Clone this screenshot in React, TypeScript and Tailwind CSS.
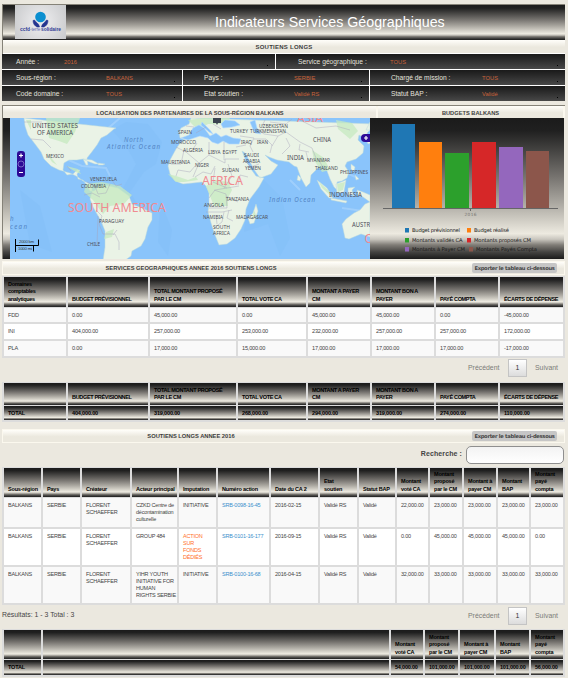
import React from "react";

const metal =
  "bg-[linear-gradient(to_bottom,#1b1b1b_0%,#202020_9%,#474644_24%,#777470_42%,#aaa7a0_60%,#edeae0_82%,#c9c6be_86%,#807d77_90%,#454442_95%,#1b1b1b_100%)]";
const strip = "bg-[linear-gradient(to_bottom,#fffefa_0%,#ebe8de_55%,#ebe8de_100%)]";
const sans = "font-['Liberation_Sans',Arial,sans-serif]";
const verdana = "font-['DejaVu_Sans',Verdana,sans-serif]";

type Field = { label: string; value: string; labelClass: string };

function FieldCell({ label, value, labelClass, last }: Field & { last?: boolean }) {
  return (
    <div
      className={`relative flex h-full items-center bg-gradient-to-b from-[#1a1a1a] to-[#484848] ${last ? "" : "border-r border-white"}`}
    >
      <span className={`shrink-0 text-[6.7px] text-[#e4e2dc] ${labelClass}`}>{label}</span>
      <span className="text-[5.8px] text-[#c8623a]">{value}</span>
      <i className="absolute right-[7px] bottom-[3px] size-[1.5px] bg-black" />
    </div>
  );
}

function Lines({ text }: { text: string }) {
  return (
    <>
      {text.split("|").map((l) => (
        <span key={l} className="block whitespace-nowrap">
          {l}
        </span>
      ))}
    </>
  );
}

function HeadRow({ cells, className }: { cells: string[]; className: string }) {
  return (
    <>
      {cells.map((c, i) => (
        <div key={i} className={`flex flex-col justify-end overflow-hidden font-bold text-black ${metal} ${className}`}>
          <Lines text={c} />
        </div>
      ))}
    </>
  );
}

function TitleBar({ title }: { title: string }) {
  return (
    <div className={`ml-[2px] flex h-[14px] w-[563px] items-center border border-[#fbf8ee] ${strip}`}>
      <div className="w-[375px] pl-px text-center text-[5.75px] font-bold text-[#3d3d3d]">{title}</div>
      <button
        className={`ml-[94px] h-[10px] w-[85px] rounded-[2px] bg-[#c6c6c6] text-center text-[5.2px] leading-[10px] font-bold tracking-[-0.29px] whitespace-nowrap text-[#444] ${verdana}`}
      >
        Exporter le tableau ci-dessous
      </button>
    </div>
  );
}

function Pager() {
  return (
    <div className="flex items-center text-[6.9px] text-[#7c7c78]">
      <span className="w-[40px]">Précédent</span>
      <span className="flex h-[18px] w-[19px] items-center justify-center border border-[#c4c4c4] bg-gradient-to-b from-white to-[#dcdcdc] text-[#333]">
        1
      </span>
      <span className="ml-2 w-[30px]">Suivant</span>
    </div>
  );
}

const cols1 = "grid-cols-[62px_80px_86px_68px_62px_62px_62px_63px]";
const cols3 = "grid-cols-[37px_37px_48px_45px_37px_51px_47px_37px_36px_31px_32px_32px_31px_32px]";
const cols4 = "grid-cols-[37px_346px_32px_33px_34px_33px_32px]";

const heads1 = [
  "BUDGET PRÉVISIONNEL",
  "TOTAL MONTANT PROPOSÉ|PAR LE CM",
  "TOTAL VOTE CA",
  "MONTANT A PAYER|CM",
  "MONTANT BON A|PAYER",
  "PAYÉ COMPTA",
  "ÉCARTS DE DÉPENSE",
];
const rows1 = [
  ["FDD", "0.00", "45,000.00", "0.00", "45,000.00", "45,000.00", "0.00", "-45,000.00"],
  ["INI", "404,000.00", "257,000.00", "253,000.00", "232,000.00", "257,000.00", "257,000.00", "172,000.00"],
  ["PLA", "0.00", "17,000.00", "15,000.00", "17,000.00", "17,000.00", "17,000.00", "-17,000.00"],
];
const totals1 = ["TOTAL", "404,000.00", "319,000.00", "268,000.00", "294,000.00", "319,000.00", "274,000.00", "110,000.00"];

const amounts = ["Montant|voté CA", "Montant|proposé|par le CM", "Montant à|payer CM", "Montant|BAP", "Montant|payé|compta"];
const heads3 = [
  "Sous-région", "Pays", "Créateur", "Acteur principal", "Imputation", "Numéro action", "Date du CA 2", "Etat|soutien", "Statut BAP",
  ...amounts,
];
const rows3 = [
  ["BALKANS", "SERBIE", "FLORENT|SCHAEFFER", "CZKD Centre de|décontamination|culturelle", "INITIATIVE", "SRB-0098-16-45", "2016-02-15", "Validé RS", "Validé", "22,000.00", "23,000.00", "23,000.00", "23,000.00", "23,000.00"],
  ["BALKANS", "SERBIE", "FLORENT|SCHAEFFER", "GROUP 484", "ACTION|SUR|FONDS|DÉDIÉS", "SRB-0101-16-177", "2016-09-15", "Validé RS", "Validé", "0.00", "45,000.00", "45,000.00", "45,000.00", "0.00"],
  ["BALKANS", "SERBIE", "FLORENT|SCHAEFFER", "YIHR YOUTH|INITIATIVE FOR|HUMAN|RIGHTS SERBIE", "INITIATIVE", "SRB-0100-16-68", "2016-04-15", "Validé RS", "Validé", "32,000.00", "33,000.00", "33,000.00", "33,000.00", "33,000.00"],
];
const totals4 = ["TOTAL", "", "54,000.00", "101,000.00", "101,000.00", "101,000.00", "56,000.00"];

/* label, left x, baseline y, width */
const places: [string, number, number, number][] = [
  ["UNITED STATES", 32, 128, 46], ["OF AMERICA", 37, 135, 36], ["MEXICO", 46, 158, 18],
  ["VENEZUELA", 90, 181, 27], ["COLOMBIA", 81, 188, 25], ["PARAGUAY", 99, 222.5, 25], ["CHILE", 87, 245.5, 13],
  ["SPAIN", 178, 133.5, 14], ["MOROCCO", 171, 144, 25], ["ALGERIA", 183, 152, 20], ["LIBYA", 208, 153.5, 12.5],
  ["EGYPT", 222.5, 153.5, 14.5], ["MAURITANIA", 161, 164, 29], ["NIGER", 195, 167, 14], ["SUDAN", 222, 171.5, 17],
  ["TURKEY", 230, 133, 18], ["TURKMENISTAN", 250, 133, 36], ["UZBEKISTAN", 259, 127.5, 29], ["IRAQ", 241, 144, 11],
  ["IRAN", 257, 144, 11], ["SAUDI", 244, 157, 15], ["ARABIA", 243, 163.2, 17], ["YEMEN", 245, 170, 16],
  ["CHINA", 313, 142, 18], ["INDIA", 287, 160, 17], ["MYANMAR", 307, 162, 23], ["THAILAND", 315, 169.5, 23],
  ["PHILIPPINES", 340, 174, 28], ["INDONESIA", 329, 197, 33], ["ANGOLA", 204, 206.5, 20], ["TANZANIA", 226, 201, 23],
  ["NAMIBIA", 203, 219, 20], ["MADAGASCAR", 236, 218.5, 32], ["SOUTH", 213, 228.5, 17], ["AFRICA", 213, 234.5, 17],
  ["AUSTR", 352, 227, 18],
];
const large = ["UNITED STATES", "OF AMERICA", "CHINA", "INDIA", "INDONESIA", "AUSTR"];

function WorldMap() {
  return (
    <svg viewBox="10 118 360 141" className="h-[141px] w-[360px] shrink-0" fontFamily="'Noto Sans','Open Sans',sans-serif">
      <rect x="10" y="118" width="360" height="141" fill="#8ac4fb" />
      <g fill="#7fbcf5" opacity=".3">
        <path d="M112 130l14-8 22 2 14 18-6 22-12 8-14 20 16 26-6 22-8-20-12-26 16-30-10-18z" />
        <path d="M248 186l14-8 20 20 8 40-10 18-12-32-24 8z" />
        <path d="M20 190l20 16 12 46-22-8zM160 200l12 30-4 26-10-14z" />
      </g>
      <g fill="none" stroke="#b3dafd" strokeWidth="2" opacity=".5">
        <path d="M120 118l-14 12-18 22M64 158l18 8 24 2 4 8M300 190l-10-10M332 178l12-6 14 6M342 208l28 4" />
      </g>
      <g fill="#eaf3e6" stroke="#b9d9dd" strokeWidth=".5">
        <path d="M24 118l1 8 3 9 7 9 6 8 3 7 7 7 8 4 11 3 8 4 5 4 5 2 4 3 0 6-2 7 3 8 8 14 4 10 0 16-3 20-2 10-2 7h10l6-8 5-7 5-8 7-5 1-5 9-5 4-7 3-12 4-7 0-7-10-5-10-4-3-8-11-8-13-3-7 2-4 4-4 0-4-7-3-4-5-1-1-5 3-4-3 0-4 4-6 1-4-5 1-7 5-3 8 0 6-1 3 6 2 0-1-7 4-5 6-8 4-7 6-3 7-6 2-1z" />
        <path d="M83 159l9 1 7 4-4 0-8-3zM98 163l7 1-2 1-5 0z" />
        <path d="M191 118l-2 6-8 4-2 4 1 6 5 2-5 3-4 6-6 11-2 6 2 8 5 7 8 3 10-1 9-1 4 4 3 7 0 10-1 9 3 11 4 12 4 10 8-1 8-6 6-9 4-9 1-11 4-10 9-12 5-9-8-2-5-7-5-8-4-10 3 2 5 9 5 9 5 7 11-4 7-9-7-4-6-6 4 2 8 3 12 2 5 4 3 1 4 11 5 9 4-4 1-8 8-8 5-2 3 6 3 8 4 8 4 4-1-9 5-1 5-3 2-6-4-6 2-4 9-3 7-6 1-7-6-6 1-5 7 4 2 5 3-1-4-10 9-9z" />
        <path d="M256 204l2 7-4 12-4 1-2-6 5-5zM298 175l3 3-1 3-3-1zM317 180l10 8 6 10-4 0-8-9zM331 198l16 3-1 2-15-3zM336 184l10-4-2 12-7 1zM348 188l7-1-3 3 2 6-4-2-2 3zM357 190l6 2 7 3v7l-7-5-5-2zM351 164l4 3-1 5-3-3zM355 175l4 4-3 1z" />
        <path d="M370 202l-5 2-5 6-6 3-8 6-4 5 3 14 4 1 12-5 9 3v-35zM366 130l4-8v8z" />
      </g>
      <g fill="#c6eac0" opacity=".75">
        <path d="M46 118l34 0-5 14-8 12-8-3-10-3zM26 120l5 10 0-10zM46 152l7 8 4 5-5-3zM66 166l12 3 3 5-5-2z" />
        <path d="M86 184l16-2 18 4 12 9-8 9-14 2-7 8-10-14-9-8zM106 232l8-3-2 8-8 2z" />
        <path d="M206 186l10-6 12 2 4 8-4 8 0 8-14 0-4-10zM168 174l8 2 12 4 8-3 2 3-14 2-8 0zM336 120l16 3 6 8-8 8-12-10zM312 150l12 8 6 12-8 2-8-12zM337 184l8-2-2 8-5 2zM319 182l10 9 2 5-9-8zM188 120l16-2 26 0-4 6-18 0-10 6zM254 210l2 5-4 5z" />
      </g>
      <g fill="#8ac4fb" stroke="#b3dafd" strokeWidth=".6">
        <path d="M181 138l8-3 4-7 6-3 5 3 6 8 6-3 5 4 5-2 7 3 8 1-2 5-10 0-6-3-5 3-6-2-4-4-8-2-12 4z" />
        <path d="M202 122l8 8 3 4-4-2-8-7zM221 124l4-4 10 1 5 4-8 2-9 1zM250 122l5-2 2 8 4 6-6-1-3-6z" />
      </g>
      <g fill="none" stroke="#a7a3bb" strokeWidth=".55" opacity=".8">
        <path d="M24 122h18M31 139l12 1 8 8M67 166l4 5M87 182l8 4 3 8 8-1 4-9M112 180l4 6 6-2M84 195l8-2 8 4M96 210l6 6-3 8 4 10 12 0 4 8 0 8M98 216l-1 30M113 235l4-5" />
        <path d="M176 147l10 5 13 11 10-8v-13M171 164h10l3-14M197 143l-4 6M209 155l16 8v-4h14M224 142v18M199 163l-6 14M176 176l2-6 12 2 5-6M195 177l8-5 8 2 4-8M215 168l-2 14 14 6 12-2M228 164l4 12-8 12M227 188l-12 2-6 8M214 190l12 4 1 14h-18M226 196l12 6M206 212h16l10-2M224 212l-2 10-8 6M216 215l1 9M229 210l-2 8 6 3M238 185l2-10 8 2" />
        <path d="M196 133l10-6M213 124l8 5M240 136l14 2-4 8 3 6M246 145l-10 2M254 139l12 0 6 6-2 8M256 128l8 6 14 2-6 10M270 122l16 2 6-5M278 136l8-4 14 10 12 6 4 10M286 138l4 8-8 8M300 144l-1 6 10 2M318 158l6 12 4-4M322 158l6 2M306 152l2 8M300 120l16 8 20-2 14 4M243 159l8 8 8-3M186 126l8 1M262 126l3-6" />
      </g>
      <g fill="#f08a90">
        <text x="68" y="211.500" textLength="98" lengthAdjust="spacingAndGlyphs" fontSize="12">SOUTH AMERICA</text>
        <text x="202" y="184.500" textLength="41" lengthAdjust="spacingAndGlyphs" fontSize="12">AFRICA</text>
        <text x="297" y="121.500" textLength="26" lengthAdjust="spacingAndGlyphs" fontSize="10">ASIA</text>
        <text x="364.500" y="243" fontSize="12">O</text>
      </g>
      <g fill="#5385c4" fontStyle="italic" fontSize="6.200">
        <text x="124" y="141.500" textLength="19">North</text>
        <text x="107" y="149" textLength="53">Atlantic Ocean</text>
        <text x="269" y="201.500" textLength="46">Indian Ocean</text>
        <text x="10" y="221">h</text>
        <text x="10" y="229" textLength="17">cean</text>
      </g>
      <g fill="#4d4d57">
        {places.map(([n, x, y, w]) => (
          <text key={n} x={x} y={y} textLength={w} lengthAdjust="spacingAndGlyphs" fontSize={large.includes(n) ? 6.4 : 5.3}>
            {n}
          </text>
        ))}
      </g>
      <path d="M213 118h8v5h-3l-1 2-1-2h-3z" fill="#3c4450" />
      <rect x="17" y="151" width="8" height="26" rx="3" fill="#2d0a96" />
      <path d="M21 153.500v4M19 155.500h4M19 172.500h4" stroke="#fff" strokeWidth="1.200" />
      <circle cx="21" cy="164" r="3" fill="none" stroke="#8d7fd0" strokeWidth=".8" />
      <path d="M370 134h-5a4 4 0 0 0 0 8h5z" fill="#2d0a96" />
      <path d="M366 136v4M364 138h4" stroke="#fff" strokeWidth="1.200" />
      <path d="M15.500 239v13M15.500 245.500h23v-6M33.500 245.500v6" fill="none" stroke="#000" />
      <g fontFamily="'Liberation Sans',Arial,sans-serif" fontSize="4.300" fill="#333">
        <text x="19" y="243.300" textLength="15">2000 km</text>
        <text x="18" y="250.300" textLength="14">1000 mi</text>
      </g>
    </svg>
  );
}

const bars: [number, number, number, string][] = [
  [392, 124, 23, "#1f77b4"], [419, 142, 23, "#ff7f0e"], [445, 153, 24, "#2ca02c"],
  [472, 142, 24, "#d62728"], [499, 147, 24, "#9467bd"], [526, 151, 23, "#8c564b"],
];
const legend: [number, number, number, number, string, string][] = [
  [405, 228, 412, 48, "Budget prévisionnel", "#1f77b4"], [467, 228, 474, 35, "Budget réalisé", "#ff7f0e"],
  [405, 238, 412, 50.5, "Montants validés CA", "#2ca02c"], [467, 238, 474, 57, "Montants proposés CM", "#d62728"],
  [405, 247, 412, 53, "Montants à Payer CM", "#9467bd"], [469, 247, 476, 61, "Montants Payés Compta", "#8c564b"],
];

function BudgetChart() {
  return (
    <svg viewBox="370 118 194 141" className={`h-[141px] w-[194px] shrink-0 ${metal}`} fontFamily="'DejaVu Sans',Verdana,sans-serif">
      {bars.map(([x, y, w, c]) => (
        <rect key={x} x={x} y={y} width={w} height={208 - y} fill={c} />
      ))}
      <path d="M383 208.500h175M470.500 209v2" stroke="#666" fill="none" />
      <text x="464.500" y="216" textLength="12" fontSize="4.300" fill="#77756f">2016</text>
      {legend.map(([x, y, tx, w, label, c]) => (
        <g key={label}>
          <rect x={x} y={y} width="4" height="4.500" fill={c} />
          <text x={tx} y={y + 4.2} textLength={w} fontSize="5.200" fill="#1a1a1a">{label}</text>
        </g>
      ))}
    </svg>
  );
}

function Logo() {
  return (
    <svg viewBox="0 0 51 34" className="ml-3 h-[34px] w-[51px] bg-[radial-gradient(circle,#e8e8ea_20%,#c9cacc_100%)]">
      <circle cx="25.500" cy="12" r="5.300" fill="#0c8fd0" />
      <path d="M18 15.500l1.500-.500c1 2.500 4.500 3 5 7h-2.500c-2-1-4-3-4-6.500zM33 15.500l-1.500-.500c-1 2.500-4.500 3-5 7h2.500c2-1 4-3 4-6.500z" fill="#24348f" stroke="#24348f" strokeWidth=".6" />
      <g fontFamily="'Liberation Sans',Arial,sans-serif" fontSize="4.800" fontWeight="bold" fill="#2d3a94">
        <text x="5" y="26" textLength="10">ccfd</text>
        <text x="15" y="26" textLength="10.500" fontWeight="normal" fill="#6a72b0">-terre</text>
        <text x="26" y="26" textLength="20">solidaire</text>
      </g>
    </svg>
  );
}

export default function App() {
  return (
    <main className={`h-[678px] w-[568px] overflow-hidden bg-[#ebe8df] pt-1 ${sans}`}>
      <header className="ml-[2px] w-[563px] border-t border-l border-[#858278]">
        <div className={`flex h-[35px] items-start ${metal}`}>
          <Logo />
          <h1 className="ml-[149px] text-[14.25px] leading-[34px] whitespace-nowrap text-white">Indicateurs Services Géographiques</h1>
        </div>
        <div className={`h-[14px] border-b border-white text-center text-[6px] leading-[15px] font-bold tracking-[0.25px] text-[#3d3d3d] ${strip}`}>
          SOUTIENS LONGS
        </div>
      </header>
      <section className="ml-[2px] grid w-[563px] grid-rows-[15px_15px_15px] gap-px bg-white leading-[14px]">
        <div className="grid grid-cols-[274px_289px]">
          <FieldCell label="Année :" value="2016" labelClass="ml-[14px] w-[48px]" />
          <FieldCell label="Service géographique :" value="TOUS" labelClass="ml-[22px] w-[92px]" last />
        </div>
        <div className="grid grid-cols-[181px_187px_195px]">
          <FieldCell label="Sous-région :" value="BALKANS" labelClass="ml-[14px] w-[90px]" />
          <FieldCell label="Pays :" value="SERBIE" labelClass="ml-[21px] w-[90px]" />
          <FieldCell label="Chargé de mission :" value="TOUS" labelClass="ml-[21px] w-[91px]" last />
        </div>
        <div className="grid grid-cols-[181px_187px_195px]">
          <FieldCell label="Code domaine :" value="TOUS" labelClass="ml-[14px] w-[90px]" />
          <FieldCell label="Etat soutien :" value="Validé RS" labelClass="ml-[21px] w-[90px]" />
          <FieldCell label="Statut BAP :" value="Validé" labelClass="ml-[21px] w-[91px]" last />
        </div>
      </section>

      <section className="mt-1 ml-[2px] w-[563px] border-t border-l border-[#858278]">
        <div className="flex h-[12px] gap-[2px] bg-[#fbf8ee] text-center text-[5.7px] leading-[14px] font-bold text-[#3d3d3d]">
          <h2 className={`w-[373px] pl-px ${strip}`}>LOCALISATION DES PARTENAIRES DE LA SOUS-RÉGION BALKANS</h2>
          <h2 className={`w-[185px] ${strip}`}>BUDGETS BALKANS</h2>
        </div>
        <div className="flex h-[141px]">
          <div className={`w-[7px] ${metal}`} />
          <WorldMap />
          <BudgetChart />
        </div>
      </section>

      <div className="mt-[2px]">
        <TitleBar title="SERVICES GEOGRAPHIQUES ANNEE 2016 SOUTIENS LONGS" />
      </div>
      <section
        className={`mt-px ml-[2px] grid w-[563px] grid-rows-[30px_15px_17px_17px] gap-x-[2px] bg-[#dcdcdc] px-[2px] pt-px pb-[2px] text-[5.6px] leading-[7.5px] tracking-[-0.2px] ${cols1}`}
      >
        <HeadRow cells={["Domaines|comptables|analytiques", ...heads1]} className="pb-1 pl-1 text-[5.5px] tracking-[-0.32px]" />
        {rows1.map((r, ri) =>
          r.map((c, i) => (
            <div
              key={`${ri}-${i}`}
              className={`flex items-center border-[#dcdcdc] pt-px pl-1 whitespace-nowrap text-[#444] ${ri === 1 ? "border-t-2 bg-white" : ri === 2 ? "border-t-2 bg-[#f9f9f9]" : "border-t bg-[#f9f9f9]"}`}
            >
              {c}
            </div>
          )),
        )}
      </section>
      <div className="mt-px ml-[468px]">
        <Pager />
      </div>
      <section
        className={`mt-[5px] ml-[2px] grid w-[563px] grid-rows-[22px_14px] gap-x-[2px] gap-y-px bg-[#dcdcdc] px-[2px] pt-px pb-[2px] text-[5.5px] leading-[7px] ${cols1}`}
      >
        <HeadRow cells={["", ...heads1]} className="pb-1 pl-1 tracking-[-0.32px]" />
        <HeadRow cells={totals1} className="pb-[3px] pl-1 tracking-[-0.15px]" />
      </section>

      <div className="mt-[7px]">
        <TitleBar title="SOUTIENS LONGS ANNEE 2016" />
      </div>
      <div className="flex h-[23px] items-center justify-end pr-1 text-[7px] font-bold text-[#444]">
        <span className="mr-1 tracking-[0.1px]">Recherche :</span>
        <span className="h-[18px] w-[98px] rounded-[5px] border border-[#8f8f8f] bg-gradient-to-b from-[#f3f3f3] to-white" />
      </div>
      <section
        className={`mt-px ml-[2px] grid w-[563px] grid-rows-[29px_30px_38px_38px] gap-x-[2px] bg-[#dcdcdc] px-[2px] pt-px pb-[2px] text-[5.5px] leading-[7px] tracking-[-0.2px] ${cols3}`}
      >
        <HeadRow cells={heads3} className="pb-1 pl-1 leading-[7.5px]" />
        {rows3.map((r, ri) =>
          r.map((c, i) => (
            <div
              key={`${ri}-${i}`}
              className={`border-[#dcdcdc] pt-[4px] pl-1 ${ri === 1 ? "border-t-2 bg-white" : ri === 2 ? "border-t-2 bg-[#f9f9f9]" : "border-t bg-[#f9f9f9]"} ${i === 5 ? "text-[#3a8fcc]" : ri === 1 && i === 4 ? "text-[#ff6f2c]" : "text-[#444]"}`}
            >
              <Lines text={c} />
            </div>
          )),
        )}
      </section>
      <div className="mt-[2px] flex h-[18px] items-start justify-between pl-[2px]">
        <span className="text-[6.9px] leading-[15px] text-[#444]">Résultats: 1 - 3 Total : 3</span>
        <div className="w-[100px]">
          <Pager />
        </div>
      </div>
      <section
        className={`mt-1 ml-[2px] grid w-[563px] grid-rows-[29px_15px] gap-x-[2px] gap-y-px bg-[#dcdcdc] px-[2px] pt-px pb-[2px] text-[5.5px] leading-[7.5px] tracking-[-0.2px] ${cols4}`}
      >
        <HeadRow cells={["", "", ...amounts]} className="pb-[3px] pl-1" />
        <HeadRow cells={totals4} className="pb-1 pl-1" />
      </section>
    </main>
  );
}
